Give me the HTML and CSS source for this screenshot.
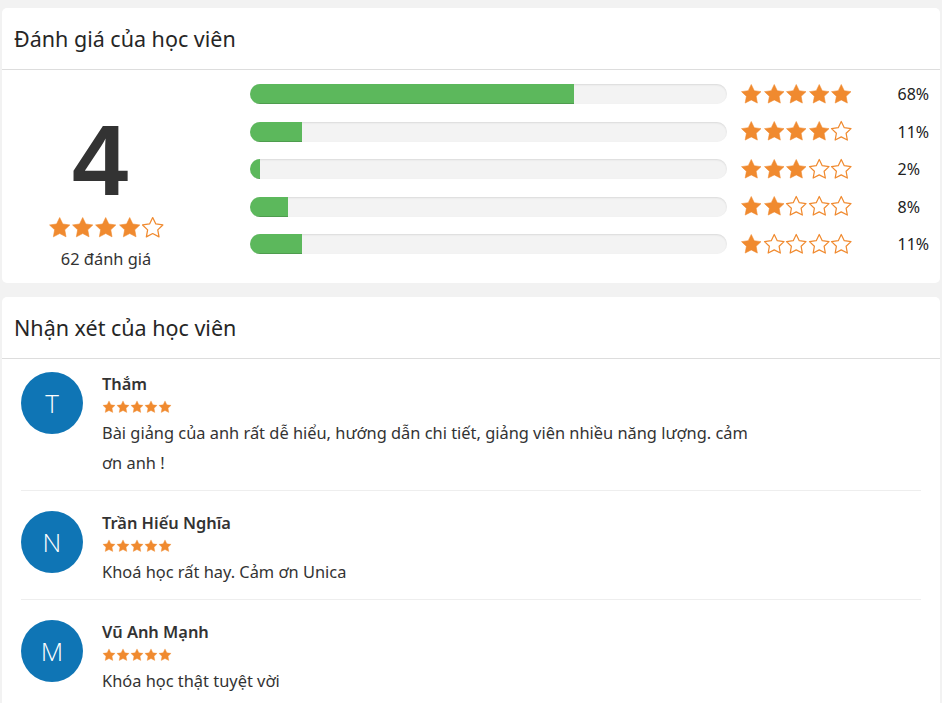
FILE: index.html
```html
<!DOCTYPE html>
<html lang="vi">
<head>
<meta charset="utf-8">
<title>Đánh giá</title>
<link rel="stylesheet" href="styles.css">
</head>
<body>
<svg width="0" height="0" class="defs" aria-hidden="true">
  <defs>
    <symbol id="star" viewBox="0 0 24 24"><polygon points="12,1.6 15.2,8.2 22.4,9.2 17.2,14.2 18.5,21.4 12,18 5.5,21.4 6.8,14.2 1.6,9.2 8.8,8.2" stroke-linejoin="round"/></symbol>
  </defs>
</svg>

<section class="card">
  <header class="card-head"><h2>Đánh giá của học viên</h2></header>
  <div class="summary">
    <div class="score">
      <div class="score-num">4</div>
      <div class="stars big">
        <svg class="s f"><use href="#star"/></svg><svg class="s f"><use href="#star"/></svg><svg class="s f"><use href="#star"/></svg><svg class="s f"><use href="#star"/></svg><svg class="s e"><use href="#star"/></svg>
      </div>
      <div class="score-count">62 đánh giá</div>
    </div>
    <div class="dist">
      <div class="row">
        <div class="bar"><div class="fill" style="width:68%"></div></div>
        <div class="stars mid"><svg class="s f"><use href="#star"/></svg><svg class="s f"><use href="#star"/></svg><svg class="s f"><use href="#star"/></svg><svg class="s f"><use href="#star"/></svg><svg class="s f"><use href="#star"/></svg></div>
        <div class="pct">68%</div>
      </div>
      <div class="row">
        <div class="bar"><div class="fill" style="width:11%"></div></div>
        <div class="stars mid"><svg class="s f"><use href="#star"/></svg><svg class="s f"><use href="#star"/></svg><svg class="s f"><use href="#star"/></svg><svg class="s f"><use href="#star"/></svg><svg class="s e"><use href="#star"/></svg></div>
        <div class="pct">11%</div>
      </div>
      <div class="row">
        <div class="bar"><div class="fill" style="width:2%"></div></div>
        <div class="stars mid"><svg class="s f"><use href="#star"/></svg><svg class="s f"><use href="#star"/></svg><svg class="s f"><use href="#star"/></svg><svg class="s e"><use href="#star"/></svg><svg class="s e"><use href="#star"/></svg></div>
        <div class="pct">2%</div>
      </div>
      <div class="row">
        <div class="bar"><div class="fill" style="width:8%"></div></div>
        <div class="stars mid"><svg class="s f"><use href="#star"/></svg><svg class="s f"><use href="#star"/></svg><svg class="s e"><use href="#star"/></svg><svg class="s e"><use href="#star"/></svg><svg class="s e"><use href="#star"/></svg></div>
        <div class="pct">8%</div>
      </div>
      <div class="row">
        <div class="bar"><div class="fill" style="width:11%"></div></div>
        <div class="stars mid"><svg class="s f"><use href="#star"/></svg><svg class="s e"><use href="#star"/></svg><svg class="s e"><use href="#star"/></svg><svg class="s e"><use href="#star"/></svg><svg class="s e"><use href="#star"/></svg></div>
        <div class="pct">11%</div>
      </div>
    </div>
  </div>
</section>

<section class="card">
  <header class="card-head"><h2>Nhận xét của học viên</h2></header>
  <div class="reviews">
    <article class="review">
      <div class="avatar">T</div>
      <div class="review-body">
        <div class="name">Thắm</div>
        <div class="stars small"><svg class="s f"><use href="#star"/></svg><svg class="s f"><use href="#star"/></svg><svg class="s f"><use href="#star"/></svg><svg class="s f"><use href="#star"/></svg><svg class="s f"><use href="#star"/></svg></div>
        <p class="text">Bài giảng của anh rất dễ hiểu, hướng dẫn chi tiết, giảng viên nhiều năng lượng. cảm ơn anh !</p>
      </div>
    </article>
    <article class="review">
      <div class="avatar">N</div>
      <div class="review-body">
        <div class="name">Trần Hiếu Nghĩa</div>
        <div class="stars small"><svg class="s f"><use href="#star"/></svg><svg class="s f"><use href="#star"/></svg><svg class="s f"><use href="#star"/></svg><svg class="s f"><use href="#star"/></svg><svg class="s f"><use href="#star"/></svg></div>
        <p class="text">Khoá học rất hay. Cảm ơn Unica</p>
      </div>
    </article>
    <article class="review">
      <div class="avatar">M</div>
      <div class="review-body">
        <div class="name">Vũ Anh Mạnh</div>
        <div class="stars small"><svg class="s f"><use href="#star"/></svg><svg class="s f"><use href="#star"/></svg><svg class="s f"><use href="#star"/></svg><svg class="s f"><use href="#star"/></svg><svg class="s f"><use href="#star"/></svg></div>
        <p class="text">Khóa học thật tuyệt vời</p>
      </div>
    </article>
  </div>
</section>
</body>
</html>
```

FILE: styles.css
```css
* { box-sizing: border-box; }
html, body { margin: 0; }
body {
  background: #f2f2f2;
  padding: 8px 2px;
  font-family: "Noto Sans", "Open Sans", sans-serif;
  color: #333;
  font-size: 16px;
}
.defs { position: absolute; }
.card {
  background: #fff;
  border-radius: 5px;
  margin-bottom: 14px;
}
.card-head {
  height: 62px;
  border-bottom: 1px solid #ddd;
  display: flex;
  align-items: center;
  padding: 0 12px;
}
.card-head h2 {
  margin: 0;
  font-size: 21.5px;
  font-weight: 400;
  color: #262626;
}
.summary {
  display: flex;
  align-items: flex-start;
  padding-top: 14px;
}
.score {
  width: 208px;
  display: flex;
  flex-direction: column;
  align-items: center;
  padding-top: 25px;
}
.score-num {
  font-family: "Liberation Sans", Arial, sans-serif;
  font-weight: 700;
  font-size: 101px;
  line-height: 1;
  height: 100px;
  padding-top: 1px;
  color: #333;
  margin-left: -12px;
}
.stars { display: flex; }
.s { display: block; }
.s.f { fill: #f08a2f; stroke: #f08a2f; stroke-width: 0.6; }
.s.e { fill: #fff; stroke: #f08a2f; stroke-width: 1.3; }
.stars.big { margin-top: 7px; }
.stars.big .s { width: 23.4px; height: 23.4px; }
.score-count {
  margin-top: 8px;
  font-size: 16.4px;
  color: #333;
}
.dist { padding-left: 40px; padding-bottom: 29px; }
.row {
  display: flex;
  align-items: center;
  height: 20px;
  margin-bottom: 17.5px;
}
.row:last-child { margin-bottom: 0; }
.bar {
  width: 477px;
  height: 20px;
  border-radius: 10px;
  background: #f3f3f3;
  box-shadow: inset 0 1px 2px rgba(0,0,0,0.1);
  overflow: hidden;
}
.fill {
  height: 100%;
  background: #5cb85c;
  box-shadow: inset 0 -1px 0 rgba(0,0,0,0.15);
}
.stars.mid { margin-left: 13px; }
.stars.mid .s { width: 22.5px; height: 22.5px; }
.pct {
  margin-left: 45px;
  font-size: 16px;
  color: #222;
}
.reviews { padding: 0 19px; }
.review {
  display: flex;
  gap: 19px;
  padding: 20px 0 12px;
  border-top: 1px solid #eee;
}
.review:first-child { border-top: 0; padding-top: 13px; }
.avatar {
  width: 62px;
  height: 62px;
  flex: none;
  border-radius: 50%;
  background: #0f75b5;
  color: #fff;
  display: flex;
  align-items: center;
  justify-content: center;
  font-size: 26px;
  font-weight: 300;
  font-family: "Open Sans", "Noto Sans", sans-serif;
}
.review-body { width: 660px; }
.name {
  font-weight: 600;
  font-size: 16.4px;
  line-height: 24px;
  color: #333;
}
.stars.small { height: 22px; align-items: center; }
.stars.small .s { width: 14px; height: 14px; }
.text {
  margin: 0;
  font-size: 16.4px;
  line-height: 30px;
  color: #333;
}
```
